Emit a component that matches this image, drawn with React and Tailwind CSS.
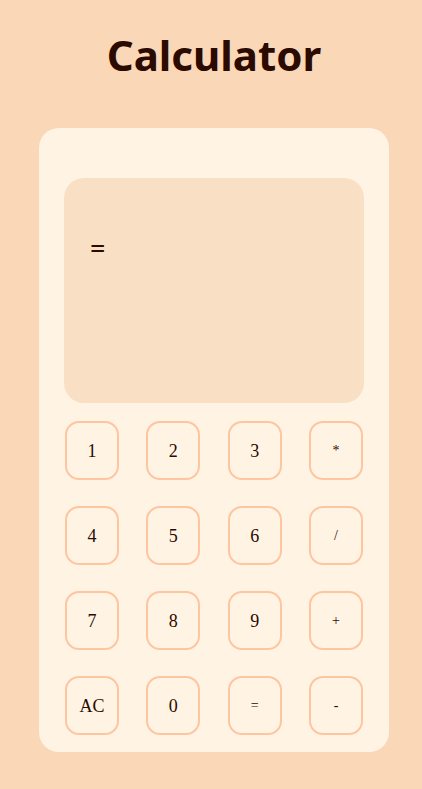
import React, { useState } from 'react';

const keys = [
  { label: '1', op: false },
  { label: '2', op: false },
  { label: '3', op: false },
  { label: '*', op: true },
  { label: '4', op: false },
  { label: '5', op: false },
  { label: '6', op: false },
  { label: '/', op: true },
  { label: '7', op: false },
  { label: '8', op: false },
  { label: '9', op: false },
  { label: '+', op: true },
  { label: 'AC', op: false },
  { label: '0', op: false },
  { label: '=', op: true },
  { label: '-', op: true },
];

const App = () => {
  const [input, setInput] = useState('');
  const [result, setResult] = useState('');

  const handleClick = (label) => {
    if (label === 'AC') {
      setInput('');
      setResult('');
      return;
    }
    if (label === '=') {
      try {
        // eslint-disable-next-line no-new-func
        setResult(String(Function('return (' + input + ')')()));
      } catch (e) {
        setResult('Error');
      }
      return;
    }
    setInput(input + label);
  };

  return (
    <div
      className="min-h-screen bg-[#fad7b7] text-[#2b0a00] flex flex-col items-center pl-[6px]"
      style={{ fontFamily: '"Liberation Serif", serif' }}
    >
      <h1 className="mt-[24px] text-[42px] leading-[62px] font-bold font-['Noto_Sans',sans-serif]">
        Calculator
      </h1>

      <div className="mt-[42px] w-[350px] bg-[#fff4e4] rounded-[20px] px-[25px] pt-[50px] pb-[17px]">
        <div className="h-[225px] bg-[#f9e0c5] rounded-[20px] pl-[26px] pt-[50px] font-['Noto_Sans',sans-serif] text-[27px] leading-[40px]">
          <div>{input}</div>
          <div>= {result}</div>
        </div>

        <div className="mt-[18px] mx-px grid grid-cols-[repeat(4,54px)] justify-between gap-y-[26px]">
          {keys.map((k) => (
            <button
              key={k.label}
              onClick={() => handleClick(k.label)}
              className={`h-[59px] w-[54px] border-2 border-[#ffc4a0] rounded-[14px] bg-[#fff4e4] flex items-center justify-center ${
                k.op ? 'text-sm' : 'text-lg'
              }`}
            >
              {k.label}
            </button>
          ))}
        </div>
      </div>
    </div>
  );
};

export default App;
